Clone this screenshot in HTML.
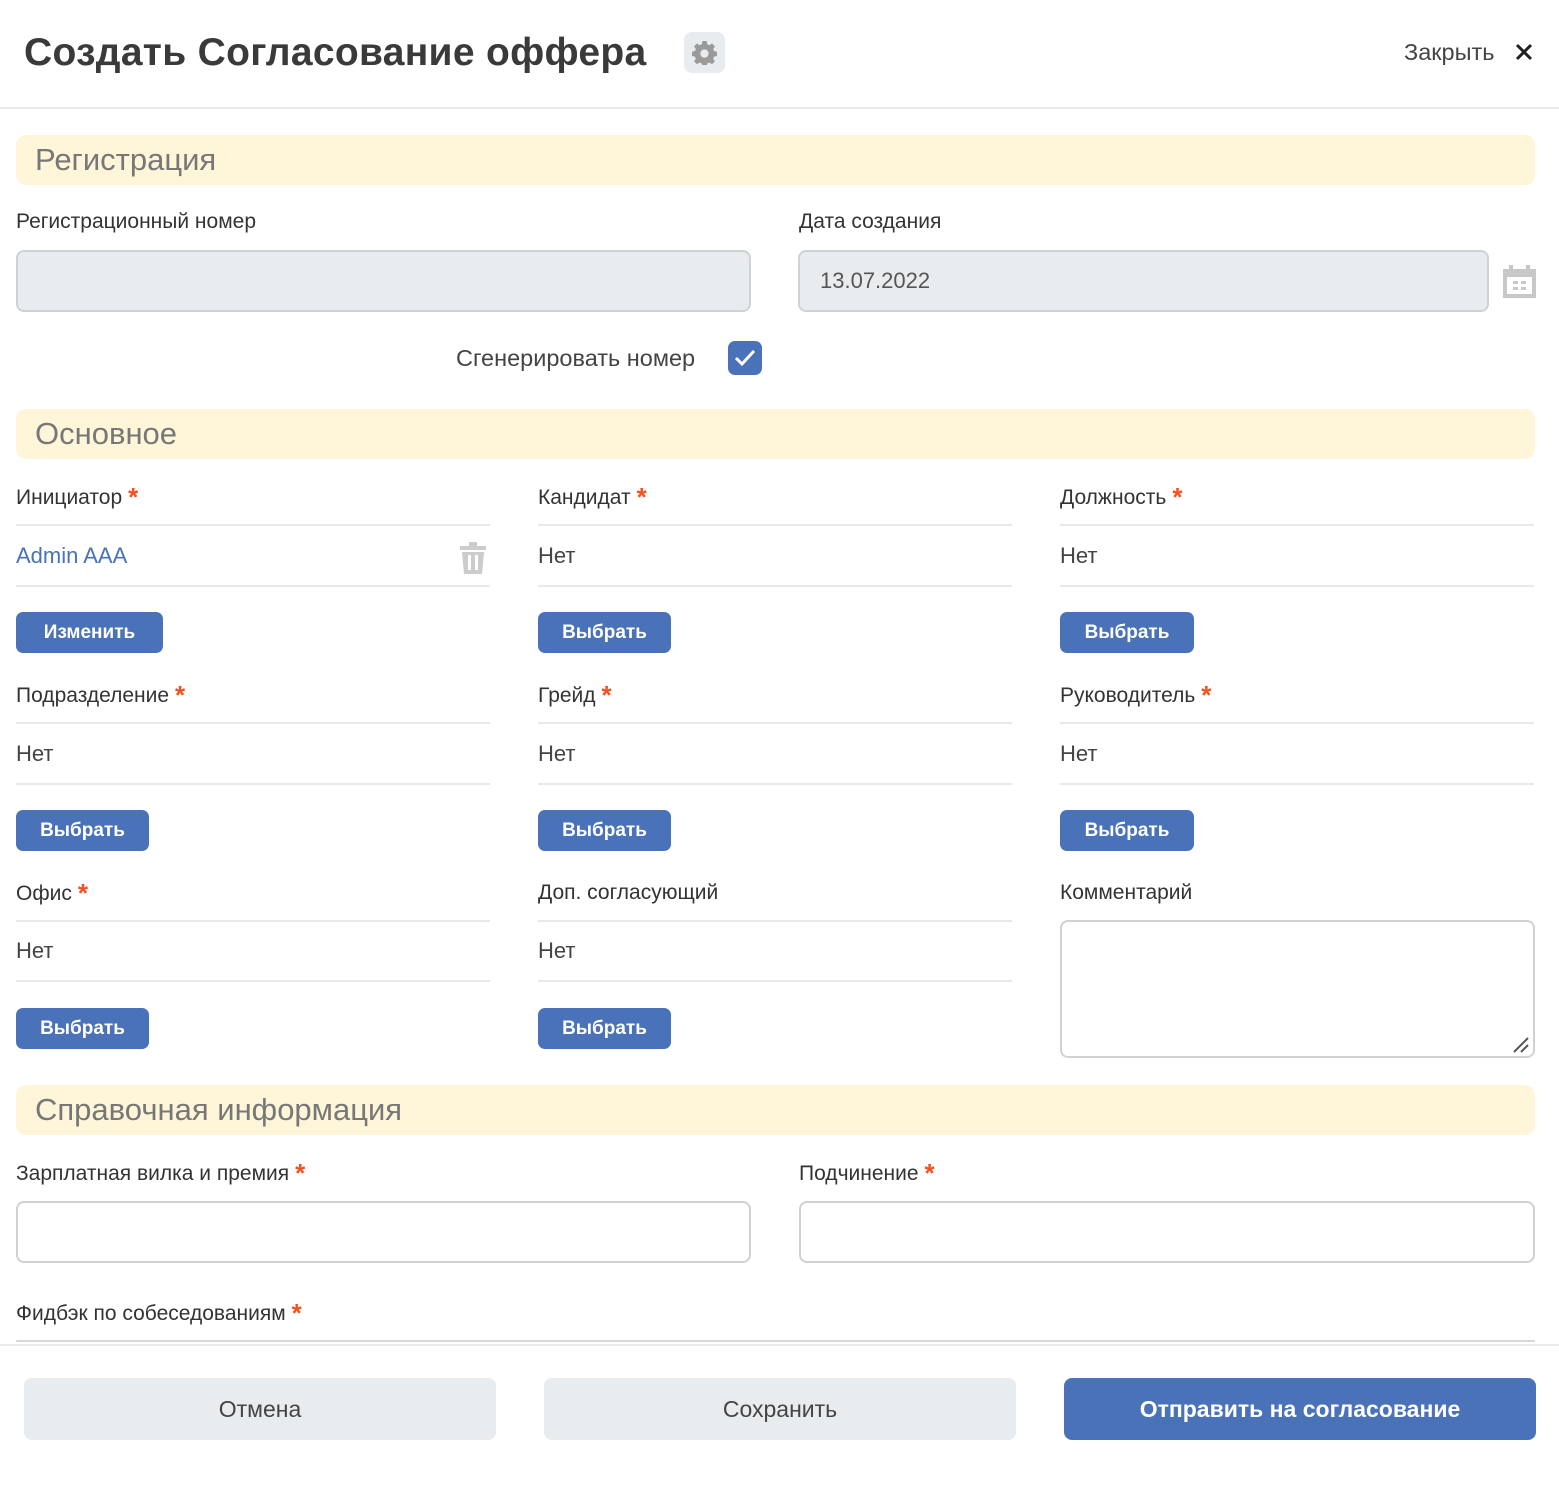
<!DOCTYPE html>
<html><head><meta charset="utf-8"><style>
*{box-sizing:border-box;margin:0;padding:0}
body{width:1559px;height:1487px;position:relative;background:#fff;font-family:"Liberation Sans",sans-serif;color:#333;overflow:hidden}
.a{position:absolute}
.sec{position:absolute;left:16px;width:1519px;height:50px;background:#fff5d8;border-radius:10px;color:#777;font-size:31px;padding-left:19px;line-height:50px}
.lbl{position:absolute;font-size:21px;color:#333;line-height:24px}
.st{color:#f4511e;font-size:26px;font-weight:bold;vertical-align:-2px;margin-left:6px}
.ln{position:absolute;height:2px;background:#e6eaec;width:474px}
.val{position:absolute;font-size:22px;color:#444;line-height:26px}
.btn{position:absolute;height:41px;background:#4a72b8;color:#fff;font-weight:bold;font-size:19px;border-radius:7px;text-align:center;line-height:41px}
.inp{position:absolute;height:62px;border:2px solid #cfd2d4;border-radius:8px}
.fb{position:absolute;top:1378px;height:62px;width:472px;border-radius:8px;background:#e8ecee;text-align:center;line-height:62px;font-size:23px;color:#444}
</style></head><body>
<div class="a" style="left:24px;top:28px;font-size:39px;font-weight:bold;color:#3a3a3a;line-height:50px;letter-spacing:0.3px">Создать Согласование оффера</div>
<div class="a" style="left:684px;top:32px;width:41px;height:41px;border-radius:8px;background:#e8ecee"></div>
<svg class="a" style="left:692px;top:40px" width="25" height="25" viewBox="0 0 24 24"><path fill="#9a9a9a" d="M10 1h4l.6 3 2 1 2.6-1.7 2.8 2.8L20.3 8.7l1 2 3 .6v4l-3 .6-1 2 1.7 2.6-2.8 2.8-2.6-1.7-2 1-.6 3h-4l-.6-3-2-1-2.6 1.7-2.8-2.8 1.7-2.6-1-2-3-.6v-4l3-.6 1-2L2 6.1 4.8 3.3 7.4 5l2-1z"/><circle cx="12" cy="13" r="4" fill="#e8ecee"/></svg>
<div class="a" style="left:1404px;top:38px;font-size:23.5px;color:#444;line-height:28px">Закрыть</div>
<svg class="a" style="left:1514px;top:42px" width="20" height="20" viewBox="0 0 20 20"><path d="M3 3L17 17M17 3L3 17" stroke="#222" stroke-width="3"/></svg>
<div class="a" style="left:0;top:107px;width:1559px;height:2px;background:#e8ecee"></div>

<div class="sec" style="top:135px">Регистрация</div>
<div class="lbl" style="left:16px;top:210px">Регистрационный номер</div>
<div class="lbl" style="left:799px;top:210px">Дата создания</div>
<div class="inp" style="left:16px;top:250px;width:735px;background:#e8ecee"></div>
<div class="inp" style="left:798px;top:250px;width:691px;background:#e8ecee;font-size:22px;color:#555;line-height:58px;padding-left:20px">13.07.2022</div>
<svg class="a" style="left:1503px;top:265px" width="33" height="33" viewBox="0 0 33 33"><rect x="0" y="4" width="33" height="29" fill="#c8c8c8"/><rect x="6" y="0" width="4" height="8" fill="#c8c8c8"/><rect x="23" y="0" width="4" height="8" fill="#c8c8c8"/><rect x="4" y="12" width="25" height="17" fill="#fff"/><rect x="10" y="16" width="5" height="3" fill="#c8c8c8"/><rect x="18" y="16" width="5" height="3" fill="#c8c8c8"/><rect x="10" y="22" width="5" height="3" fill="#c8c8c8"/><rect x="18" y="22" width="5" height="3" fill="#c8c8c8"/></svg>
<div class="a" style="left:456px;top:344px;font-size:23.5px;color:#444;line-height:28px">Сгенерировать номер</div>
<div class="a" style="left:728px;top:341px;width:34px;height:34px;border-radius:7px;background:#4a72b8"></div>
<svg class="a" style="left:728px;top:341px" width="34" height="34" viewBox="0 0 34 34"><path d="M8 17l6 6 12-13" stroke="#fff" stroke-width="3" fill="none"/></svg>

<div class="sec" style="top:409px">Основное</div>

<div class="lbl" style="left:16px;top:485px">Инициатор<span class="st">*</span></div>
<div class="lbl" style="left:538px;top:485px">Кандидат<span class="st">*</span></div>
<div class="lbl" style="left:1060px;top:485px">Должность<span class="st">*</span></div>
<div class="ln" style="left:16px;top:524px"></div><div class="ln" style="left:538px;top:524px"></div><div class="ln" style="left:1060px;top:524px"></div>
<div class="val" style="left:16px;top:543px;color:#4a72b8">Admin AAA</div>
<svg class="a" style="left:460px;top:542px" width="26" height="32" viewBox="0 0 26 32"><rect x="0" y="4" width="26" height="4" fill="#ccc"/><rect x="9" y="0" width="8" height="4" fill="#ccc"/><path d="M2 10h22l-2 22H4z" fill="#ccc"/><rect x="8" y="13" width="3" height="15" fill="#fff"/><rect x="15" y="13" width="3" height="15" fill="#fff"/></svg>
<div class="val" style="left:538px;top:543px">Нет</div>
<div class="val" style="left:1060px;top:543px">Нет</div>
<div class="ln" style="left:16px;top:585px"></div><div class="ln" style="left:538px;top:585px"></div><div class="ln" style="left:1060px;top:585px"></div>
<div class="btn" style="left:16px;top:612px;width:147px">Изменить</div>
<div class="btn" style="left:538px;top:612px;width:133px">Выбрать</div>
<div class="btn" style="left:1060px;top:612px;width:134px">Выбрать</div>

<div class="lbl" style="left:16px;top:683px">Подразделение<span class="st">*</span></div>
<div class="lbl" style="left:538px;top:683px">Грейд<span class="st">*</span></div>
<div class="lbl" style="left:1060px;top:683px">Руководитель<span class="st">*</span></div>
<div class="ln" style="left:16px;top:722px"></div><div class="ln" style="left:538px;top:722px"></div><div class="ln" style="left:1060px;top:722px"></div>
<div class="val" style="left:16px;top:741px">Нет</div>
<div class="val" style="left:538px;top:741px">Нет</div>
<div class="val" style="left:1060px;top:741px">Нет</div>
<div class="ln" style="left:16px;top:783px"></div><div class="ln" style="left:538px;top:783px"></div><div class="ln" style="left:1060px;top:783px"></div>
<div class="btn" style="left:16px;top:810px;width:133px">Выбрать</div>
<div class="btn" style="left:538px;top:810px;width:133px">Выбрать</div>
<div class="btn" style="left:1060px;top:810px;width:134px">Выбрать</div>

<div class="lbl" style="left:16px;top:881px">Офис<span class="st">*</span></div>
<div class="lbl" style="left:538px;top:881px">Доп. согласующий</div>
<div class="lbl" style="left:1060px;top:881px">Комментарий</div>
<div class="ln" style="left:16px;top:920px"></div><div class="ln" style="left:538px;top:920px"></div>
<div class="val" style="left:16px;top:938px">Нет</div>
<div class="val" style="left:538px;top:938px">Нет</div>
<div class="ln" style="left:16px;top:980px"></div><div class="ln" style="left:538px;top:980px"></div>
<div class="btn" style="left:16px;top:1008px;width:133px">Выбрать</div>
<div class="btn" style="left:538px;top:1008px;width:133px">Выбрать</div>
<div class="inp" style="left:1060px;top:920px;width:475px;height:138px"></div>
<svg class="a" style="left:1512px;top:1036px" width="18" height="18" viewBox="0 0 18 18"><path d="M2 16L16 2M9 16L16 9" stroke="#555" stroke-width="2"/></svg>

<div class="sec" style="top:1085px">Справочная информация</div>
<div class="lbl" style="left:16px;top:1161px">Зарплатная вилка и премия<span class="st">*</span></div>
<div class="lbl" style="left:799px;top:1161px">Подчинение<span class="st">*</span></div>
<div class="inp" style="left:16px;top:1201px;width:735px"></div>
<div class="inp" style="left:799px;top:1201px;width:736px"></div>
<div class="lbl" style="left:16px;top:1301px">Фидбэк по собеседованиям<span class="st">*</span></div>
<div class="a" style="left:16px;top:1340px;width:1519px;height:2px;background:#d5d8da;border-radius:2px"></div>
<div class="a" style="left:0;top:1344px;width:1559px;height:2px;background:#e8ecee"></div>

<div class="fb" style="left:24px">Отмена</div>
<div class="fb" style="left:544px">Сохранить</div>
<div class="fb" style="left:1064px;background:#4a72b8;color:#fff;font-weight:bold">Отправить на согласование</div>
</body></html>
